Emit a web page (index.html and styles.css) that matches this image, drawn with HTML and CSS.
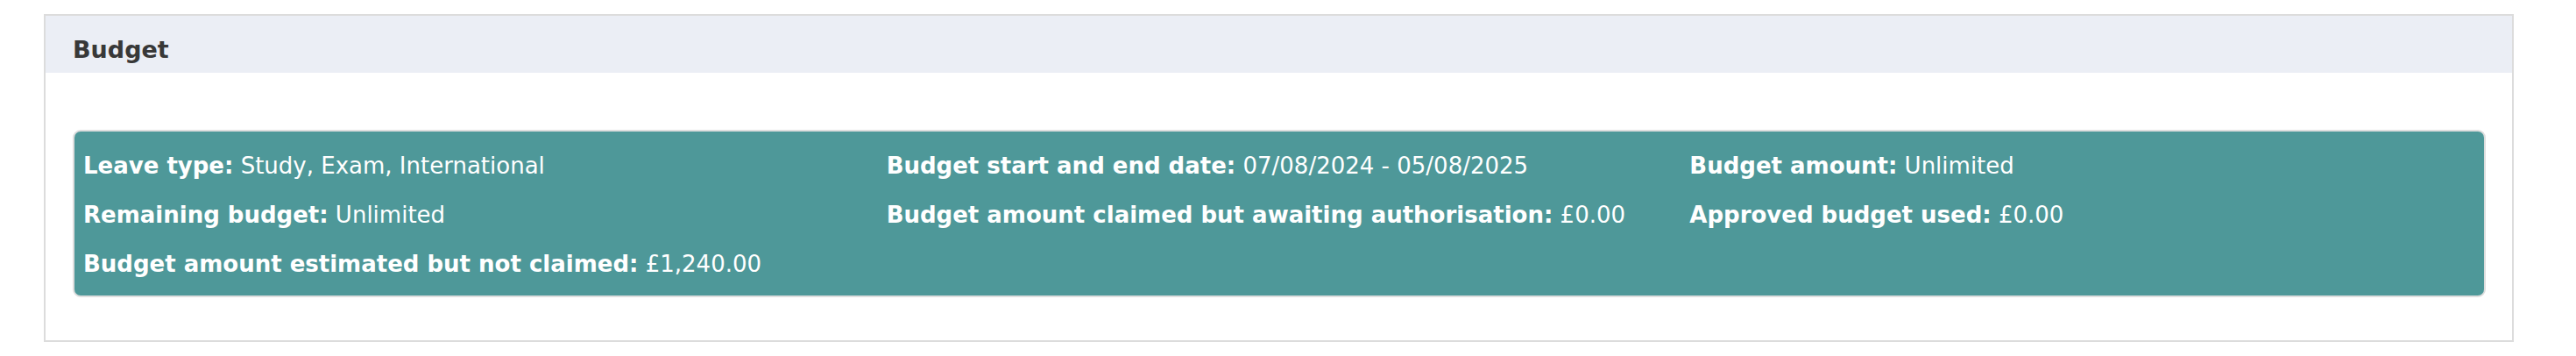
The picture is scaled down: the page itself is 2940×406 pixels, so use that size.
FILE: index.html
```html
<!DOCTYPE html>
<html lang="en">
<head>
    <meta charset="UTF-8">
    <meta name="viewport" content="width=device-width, initial-scale=1.0">
    <title>Budget</title>
    <link rel="stylesheet" href="styles.css">
</head>
<body>
    <div class="page">
        <div class="panel">
            <div class="panel-heading">
                <h2>Budget</h2>
            </div>
            <div class="panel-body">
                <div class="budget-box">
                    <div class="item"><strong>Leave type:</strong> Study, Exam, International</div>
                    <div class="item"><strong>Budget start and end date:</strong> 07/08/2024 - 05/08/2025</div>
                    <div class="item"><strong>Budget amount:</strong> Unlimited</div>
                    <div class="item"><strong>Remaining budget:</strong> Unlimited</div>
                    <div class="item"><strong>Budget amount claimed but awaiting authorisation:</strong> £0.00</div>
                    <div class="item"><strong>Approved budget used:</strong> £0.00</div>
                    <div class="item"><strong>Budget amount estimated but not claimed:</strong> £1,240.00</div>
                </div>
            </div>
        </div>
    </div>
</body>
</html>
```

FILE: styles.css
```css
body {
    margin: 0;
    font-family: "DejaVu Sans", Verdana, sans-serif;
    background-color: white;
}
.page {
    padding: 16px 71px 0 50px;
}
.panel {
    border: 2px solid #dcdcdc;
    background-color: white;
}
.panel-heading {
    background-color: #ebeef5;
    padding: 23px 31px 10px;
}
.panel-heading h2 {
    margin: 0;
    font-size: 27px;
    line-height: 32px;
    font-weight: bold;
    color: #383838;
}
.panel-body {
    padding: 65px 30px 49px 31px;
}
.budget-box {
    display: grid;
    grid-template-columns: repeat(3, 1fr);
    row-gap: 16px;
    padding: 19px 0 16px;
    background-color: #4e9899;
    border: 2px solid #dedede;
    border-radius: 9px;
    color: white;
    font-size: 26px;
    line-height: 40px;
}
.budget-box .item {
    padding: 0 10px;
    white-space: nowrap;
}
```
